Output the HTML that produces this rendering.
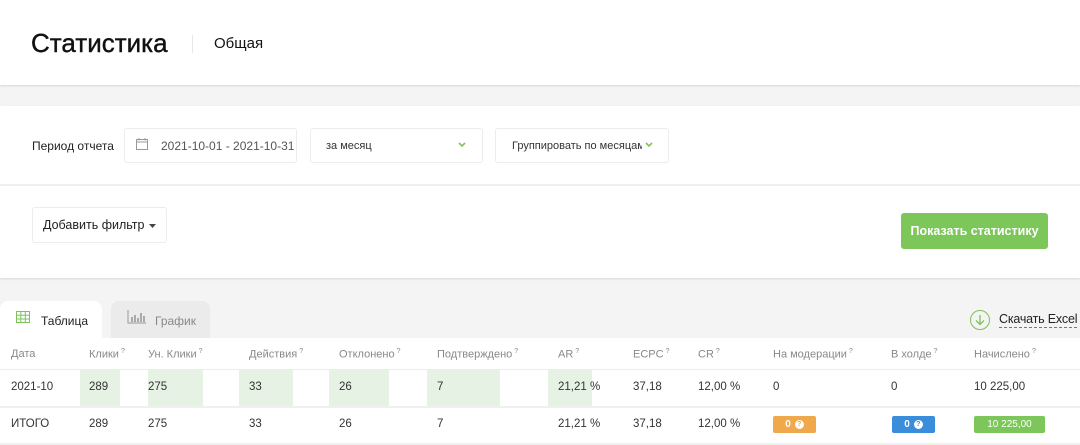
<!DOCTYPE html>
<html><head><meta charset="utf-8"><style>
*{margin:0;padding:0;box-sizing:border-box}
body{width:1080px;height:445px;background:#f4f4f4;font-family:"Liberation Sans",sans-serif;position:relative;overflow:hidden;color:#333}
.a{position:absolute;white-space:nowrap}
.card{position:absolute;background:#fff;box-shadow:0 1px 2px rgba(0,0,0,.12)}
.box{position:absolute;background:#fff;border:1px solid #ececec;border-radius:3px}
.h{font-size:11px;color:#888;top:348px}
.h sup{font-size:7px;margin-left:2px}
.r1{top:381px;font-size:11.5px;color:#333}
.r2{top:418px;font-size:11.5px;color:#333}
.g{position:absolute;top:370px;height:36px;background:#e6f3e4}
.badge{position:absolute;top:416px;height:17px;border-radius:2px;color:#fff;font-size:10px;display:flex;align-items:center;justify-content:center;font-weight:bold}
.q{display:inline-block;width:9px;height:9px;border-radius:50%;background:#fff;font-size:7px;line-height:9px;margin-left:4px;text-align:center}
</style></head><body>
<div class="card" style="left:0;top:0;width:1080px;height:85px"></div>
<div class="a" style="left:31px;top:28px;font-size:26px;color:#111;-webkit-text-stroke:0.4px #111">Статистика</div>
<div class="a" style="left:192px;top:35px;width:1px;height:18px;background:#e6e6e6"></div>
<div class="a" style="left:214px;top:35px;font-size:15px;color:#111">Общая</div>

<div class="card" style="left:0;top:106px;width:1080px;height:172px"></div>
<div class="a" style="left:0;top:184px;width:1080px;height:2px;background:#f0f0f0"></div>
<div class="a" style="left:32px;top:139px;font-size:12px;color:#222">Период отчета</div>
<div class="box" style="left:124px;top:128px;width:173px;height:35px"></div>
<svg class="a" style="left:135px;top:137px" width="14" height="14" viewBox="0 0 14 14"><rect x="1.5" y="2.5" width="11" height="10" fill="none" stroke="#999"/><line x1="1.5" y1="5" x2="12.5" y2="5" stroke="#999"/><line x1="4" y1="1" x2="4" y2="3.5" stroke="#999"/><line x1="10" y1="1" x2="10" y2="3.5" stroke="#999"/></svg>
<div class="a" style="left:161px;top:139px;font-size:12px;color:#555">2021-10-01 - 2021-10-31</div>
<div class="box" style="left:310px;top:128px;width:173px;height:35px"></div>
<div class="a" style="left:326px;top:140px;font-size:11px;color:#333">за месяц</div>
<svg class="a" style="left:458px;top:142px" width="8" height="6"><path d="M1 1 L4 4 L7 1" stroke="#7cc35a" stroke-width="1.6" fill="none"/></svg>
<div class="box" style="left:495px;top:128px;width:174px;height:35px;overflow:hidden"></div>
<div class="a" style="left:512px;top:140px;font-size:11px;color:#333;width:130px;overflow:hidden">Группировать по месяцам</div>
<svg class="a" style="left:645px;top:142px" width="8" height="6"><path d="M1 1 L4 4 L7 1" stroke="#7cc35a" stroke-width="1.6" fill="none"/></svg>

<div class="box" style="left:32px;top:207px;width:135px;height:36px"></div>
<div class="a" style="left:43px;top:218px;font-size:12.5px;color:#222">Добавить фильтр</div>
<svg class="a" style="left:149px;top:224px" width="8" height="5"><path d="M0 0 L7 0 L3.5 4Z" fill="#444"/></svg>
<div class="a" style="left:901px;top:213px;width:147px;height:36px;background:#7cc65a;border-radius:3px;color:#fff;font-size:12.5px;font-weight:bold;text-align:center;line-height:36px">Показать статистику</div>

<div class="a" style="left:0;top:301px;width:102px;height:40px;background:#fff;border-radius:8px 8px 0 0"></div>
<div class="a" style="left:111px;top:301px;width:99px;height:37px;background:#ebebeb;border-radius:8px 8px 0 0"></div>
<svg class="a" style="left:16px;top:311px" width="14" height="12"><rect x="0.5" y="0.5" width="13" height="11" fill="none" stroke="#7cc35a"/><path d="M0 4.3H14M0 8H14M4.8 0V12M9.3 0V12" stroke="#7cc35a"/></svg>
<div class="a" style="left:41px;top:314px;font-size:12px;color:#222">Таблица</div>
<svg class="a" style="left:127px;top:310px" width="20" height="14"><path d="M1 0V13H19" stroke="#999" fill="none"/><path d="M5 7V12M8 5V12M11 8V12M14 3V12M17 6V12" stroke="#999" stroke-width="1.6"/></svg>
<div class="a" style="left:155px;top:314px;font-size:12px;color:#888">График</div>
<svg class="a" style="left:969px;top:309px" width="22" height="22"><circle cx="11" cy="11" r="9.5" fill="none" stroke="#7cc35a"/><path d="M11 6V15M7 11.5L11 15.5L15 11.5" fill="none" stroke="#7cc35a" stroke-width="1.3"/></svg>
<div class="a" style="left:999px;top:312px;font-size:12.5px;color:#222;border-bottom:1px dashed #777;padding-bottom:1px;letter-spacing:-0.2px">Скачать Excel</div>

<div class="a" style="left:0;top:338px;width:1080px;height:105px;background:#fff"></div>
<div class="a" style="left:0;top:369px;width:1080px;height:1px;background:#ececec"></div>
<div class="a" style="left:0;top:406px;width:1080px;height:2px;background:#f0f0f0"></div>
<div class="a" style="left:0;top:443px;width:1080px;height:2px;background:#efefef"></div>

<div class="g" style="left:80px;width:40px"></div>
<div class="g" style="left:148px;width:55px"></div>
<div class="g" style="left:239px;width:54px"></div>
<div class="g" style="left:329px;width:60px"></div>
<div class="g" style="left:427px;width:73px"></div>
<div class="g" style="left:548px;width:44px"></div>

<div class="a h" style="left:11px">Дата</div>
<div class="a h" style="left:89px">Клики<sup>?</sup></div>
<div class="a h" style="left:148px">Ун. Клики<sup>?</sup></div>
<div class="a h" style="left:249px">Действия<sup>?</sup></div>
<div class="a h" style="left:339px">Отклонено<sup>?</sup></div>
<div class="a h" style="left:437px">Подтверждено<sup>?</sup></div>
<div class="a h" style="left:558px">AR<sup>?</sup></div>
<div class="a h" style="left:633px">ECPC<sup>?</sup></div>
<div class="a h" style="left:698px">CR<sup>?</sup></div>
<div class="a h" style="left:773px">На модерации<sup>?</sup></div>
<div class="a h" style="left:891px">В холде<sup>?</sup></div>
<div class="a h" style="left:974px">Начислено<sup>?</sup></div>

<div class="a r1" style="left:11px">2021-10</div>
<div class="a r1" style="left:89px">289</div>
<div class="a r1" style="left:148px">275</div>
<div class="a r1" style="left:249px">33</div>
<div class="a r1" style="left:339px">26</div>
<div class="a r1" style="left:437px">7</div>
<div class="a r1" style="left:558px">21,21 %</div>
<div class="a r1" style="left:633px">37,18</div>
<div class="a r1" style="left:698px">12,00 %</div>
<div class="a r1" style="left:773px">0</div>
<div class="a r1" style="left:891px">0</div>
<div class="a r1" style="left:974px">10 225,00</div>

<div class="a r2" style="left:11px">ИТОГО</div>
<div class="a r2" style="left:89px">289</div>
<div class="a r2" style="left:148px">275</div>
<div class="a r2" style="left:249px">33</div>
<div class="a r2" style="left:339px">26</div>
<div class="a r2" style="left:437px">7</div>
<div class="a r2" style="left:558px">21,21 %</div>
<div class="a r2" style="left:633px">37,18</div>
<div class="a r2" style="left:698px">12,00 %</div>
<div class="badge" style="left:773px;width:43px;background:#f0a94a">0<span class="q" style="color:#f0a94a">?</span></div>
<div class="badge" style="left:892px;width:43px;background:#3a8ddb">0<span class="q" style="color:#3a8ddb">?</span></div>
<div class="badge" style="left:974px;width:71px;background:#7cc65a;font-weight:normal">10 225,00</div>
</body></html>
